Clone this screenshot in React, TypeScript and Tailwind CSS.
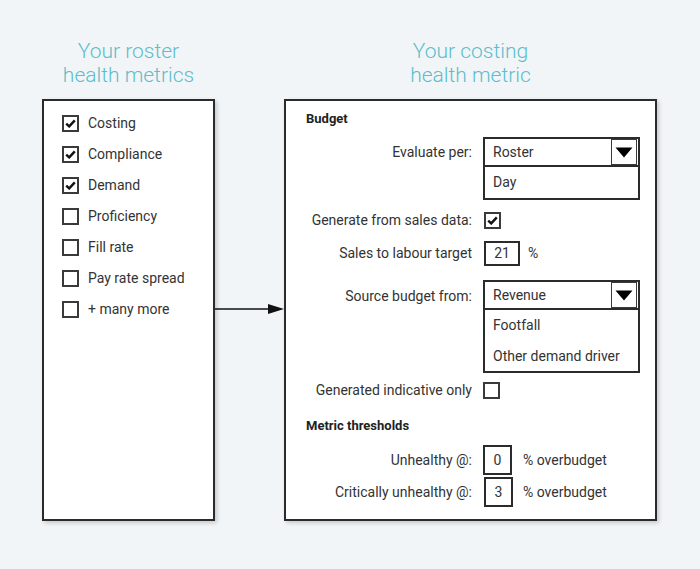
import React from "react";

const FONT = { fontFamily: "Roboto, 'Liberation Sans', sans-serif" };

function Check({ checked }: { checked?: boolean }) {
  return (
    <div className="w-[17px] h-[17px] border-2 border-[#3a3a3a] bg-white flex items-center justify-center shrink-0">
      {checked && (
        <svg width="11" height="9" viewBox="0 0 11 9">
          <path d="M1.2 4.6 L4.2 7.4 L9.8 1.4" fill="none" stroke="#111" strokeWidth="2.4" />
        </svg>
      )}
    </div>
  );
}

function Caret() {
  return (
    <div className="w-[26px] h-[26px] border-[1.5px] border-[#3a3a3a] flex items-center justify-center mr-[1px]">
      <svg width="18" height="11" viewBox="0 0 18 11">
        <path d="M0.5 0.5 H17.5 L9 10.5 Z" fill="#000" />
      </svg>
    </div>
  );
}

const METRICS: [string, boolean][] = [
  ["Costing", true],
  ["Compliance", true],
  ["Demand", true],
  ["Proficiency", false],
  ["Fill rate", false],
  ["Pay rate spread", false],
  ["+ many more", false],
];

function Label({ children, h }: { children: React.ReactNode; h: string }) {
  return (
    <div className={`w-[186px] flex items-center justify-end text-right shrink-0 ${h}`}>
      {children}
    </div>
  );
}

export default function App() {
  return (
    <div className="w-[700px] h-[569px] bg-[#f2f5f8] text-[#333] text-[14px]" style={FONT}>
      <div className="flex pl-[42px] pt-[39px]">
        {/* left column */}
        <div className="w-[173px] flex flex-col">
          <div className="text-center text-[21px] leading-[24px] font-light text-[#5cbdcb] h-[48px] -mx-4">
            Your roster
            <br />
            health metrics
          </div>
          <div className="mt-[12px] h-[422px] border-2 border-[#2b2b2b] bg-white shadow-[2px_2px_4px_rgba(0,0,0,0.18)] pl-[18px] pt-[7px]">
            {METRICS.map(([name, on]) => (
              <div key={name} className="h-[31px] flex items-center gap-[9px]">
                <Check checked={on} />
                <span>{name}</span>
              </div>
            ))}
          </div>
        </div>

        {/* arrow */}
        <div className="w-[69px] pt-[264px]">
          <svg width="69" height="12" viewBox="0 0 69 12" className="block">
            <line x1="0" y1="6" x2="56" y2="6" stroke="#111" strokeWidth="1.6" />
            <path d="M53 1 L69 6 L53 11 Z" fill="#111" />
          </svg>
        </div>

        {/* right column */}
        <div className="w-[373px] flex flex-col">
          <div className="text-center text-[21px] leading-[24px] font-light text-[#5cbdcb] h-[48px]">
            Your costing
            <br />
            health metric
          </div>
          <div className="mt-[12px] h-[422px] border-2 border-[#2b2b2b] bg-white shadow-[2px_2px_4px_rgba(0,0,0,0.18)] pt-[8px]">
            <div className="pl-[20px] h-[20px] leading-[20px] font-bold text-[13px] text-[#222]">Budget</div>

            {/* evaluate per */}
            <div className="flex items-start mt-[8px]">
              <Label h="h-[30px]">Evaluate per:</Label>
              <div className="ml-[11px] w-[157px] border-2 border-[#2b2b2b]">
                <div className="h-[28px] flex items-center justify-between pl-[8px] border-b-2 border-[#2b2b2b]">
                  <span>Roster</span>
                  <Caret />
                </div>
                <div className="h-[31px] flex items-center pl-[8px]">Day</div>
              </div>
            </div>

            <div className="flex items-center mt-[12px] h-[17px]">
              <Label h="h-[17px]">Generate from sales data:</Label>
              <div className="ml-[12px]">
                <Check checked />
              </div>
            </div>

            <div className="flex items-center mt-[12px]">
              <Label h="h-[25px]">Sales to labour target</Label>
              <div className="ml-[12px] w-[36px] h-[25px] border-2 border-[#2b2b2b] flex items-center justify-center">21</div>
              <span className="ml-[8px]">%</span>
            </div>

            {/* source budget */}
            <div className="flex items-start mt-[14px]">
              <Label h="h-[32px]">Source budget from:</Label>
              <div className="ml-[11px] w-[157px] border-2 border-[#2b2b2b]">
                <div className="h-[28px] flex items-center justify-between pl-[8px] border-b-2 border-[#2b2b2b]">
                  <span>Revenue</span>
                  <Caret />
                </div>
                <div className="h-[31px] flex items-center pl-[8px]">Footfall</div>
                <div className="h-[30px] flex items-center pl-[8px]">Other demand driver</div>
              </div>
            </div>

            <div className="flex items-center mt-[9px]">
              <Label h="h-[17px]">Generated indicative only</Label>
              <div className="ml-[11px]">
                <Check />
              </div>
            </div>

            <div className="pl-[20px] mt-[17px] h-[20px] leading-[20px] font-bold text-[13px] text-[#222]">Metric thresholds</div>

            <div className="flex items-center mt-[9px]">
              <Label h="h-[30px]">Unhealthy @:</Label>
              <div className="ml-[11px] w-[29px] h-[30px] border-2 border-[#2b2b2b] flex items-center justify-center">0</div>
              <span className="ml-[11px]">% overbudget</span>
            </div>

            <div className="flex items-center mt-[2px]">
              <Label h="h-[30px]">Critically unhealthy @:</Label>
              <div className="ml-[12px] w-[29px] h-[30px] border-2 border-[#2b2b2b] flex items-center justify-center">3</div>
              <span className="ml-[10px]">% overbudget</span>
            </div>
          </div>
        </div>
      </div>
    </div>
  );
}
